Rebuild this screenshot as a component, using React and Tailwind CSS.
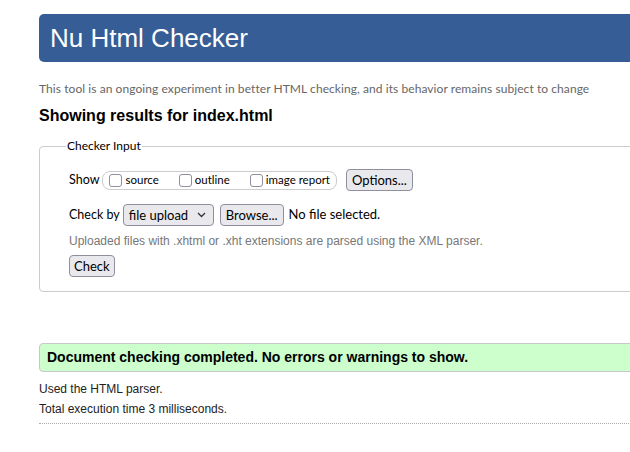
import React from "react";

const ui = { fontFamily: 'Lato, "Open Sans", sans-serif' };
const arial = { fontFamily: '"Liberation Sans", Arial, sans-serif' };

// no padding here, each button sets its own
const btn =
  "h-[22px] bg-[#e9e9ed] border border-[#8f8f9d] rounded-[4px] text-[13px] text-black leading-none";

function Check({ label }) {
  return (
    <label className="flex items-center text-[11.5px] text-black">
      <input
        type="checkbox"
        className="appearance-none w-[13px] h-[13px] m-0 border border-[#8f8f9d] rounded-[3px] bg-white"
      />
      <span className="ml-[3px]">{label}</span>
    </label>
  );
}

export default function App() {
  return (
    <div className="w-full overflow-hidden bg-white">
      <div className="ml-[39px] w-[640px] pt-[14px]">
        <header className="h-[48px] rounded-l-[5px] bg-[#365d95] pl-[11px] flex items-center">
          <h1 className="text-[26px] text-white leading-none pb-[1px]" style={arial}>
            Nu Html Checker
          </h1>
        </header>

        <p className="mt-[19px] text-[12px] leading-4 tracking-[0.07px] text-[#666]" style={ui}>
          This tool is an ongoing experiment in better HTML checking, and its behavior remains subject to change
        </p>

        <h2 className="mt-[9px] text-[16px] leading-5 font-bold text-black" style={arial}>
          Showing results for index.html
        </h2>

        <fieldset className="mt-[12px] w-[620px] border border-[#ccc] rounded-[4px] pl-[29px] pb-[14px]">
          <legend className="ml-[-3px] px-[1px] text-[12px] leading-4 text-black" style={ui}>
            Checker Input
          </legend>

          <div className="mt-[15px] flex items-center h-[22px]" style={ui}>
            <span className="text-[12.5px] text-black">Show</span>
            <div className="ml-[3px] h-[19px] flex items-center gap-[20px] border border-[#ccc] rounded-[8px] pl-[6px] pr-[6px]">
              <Check label="source" />
              <Check label="outline" />
              <Check label="image report" />
            </div>
            <button className={btn + " ml-[9px] px-[5px]"}>Options...</button>
          </div>

          <div className="mt-[13px] flex items-center h-[22px]" style={ui}>
            <span className="text-[12.5px] text-black">Check by</span>
            <div className={btn + " ml-[3px] w-[91px] flex items-center justify-between px-[5px]"}>
              <span>file upload</span>
              <svg width="9" height="6" viewBox="0 0 9 6" className="mr-[2px]">
                <path d="M1 1l3.5 3.5L8 1" fill="none" stroke="#333" strokeWidth="1.3" />
              </svg>
            </div>
            <button className={btn + " ml-[6px] px-[5px]"}>Browse...</button>
            <span className="ml-[5px] text-[13px] text-black">No file selected.</span>
          </div>

          <p className="mt-[7px] text-[12px] leading-4 text-[#777]" style={arial}>
            Uploaded files with .xhtml or .xht extensions are parsed using the XML parser.
          </p>

          <button className={btn + " mt-[6px] px-[4px]"} style={ui}>
            Check
          </button>
        </fieldset>

        <div
          className="mt-[51px] h-[29px] bg-[#ccffcc] border border-[#c8c8c8] rounded-[4px] pl-[7px] flex items-center"
          style={arial}
        >
          <p className="text-[14px] font-bold text-black">
            Document checking completed. No errors or warnings to show.
          </p>
        </div>

        <div className="text-[12px] leading-4 text-[#222]" style={arial}>
          <p className="mt-[9px]">Used the HTML parser.</p>
          <p className="mt-[4px]">Total execution time 3 milliseconds.</p>
        </div>
        <div className="mt-[6px] border-b border-dotted border-[#aaa]" />
      </div>
    </div>
  );
}
